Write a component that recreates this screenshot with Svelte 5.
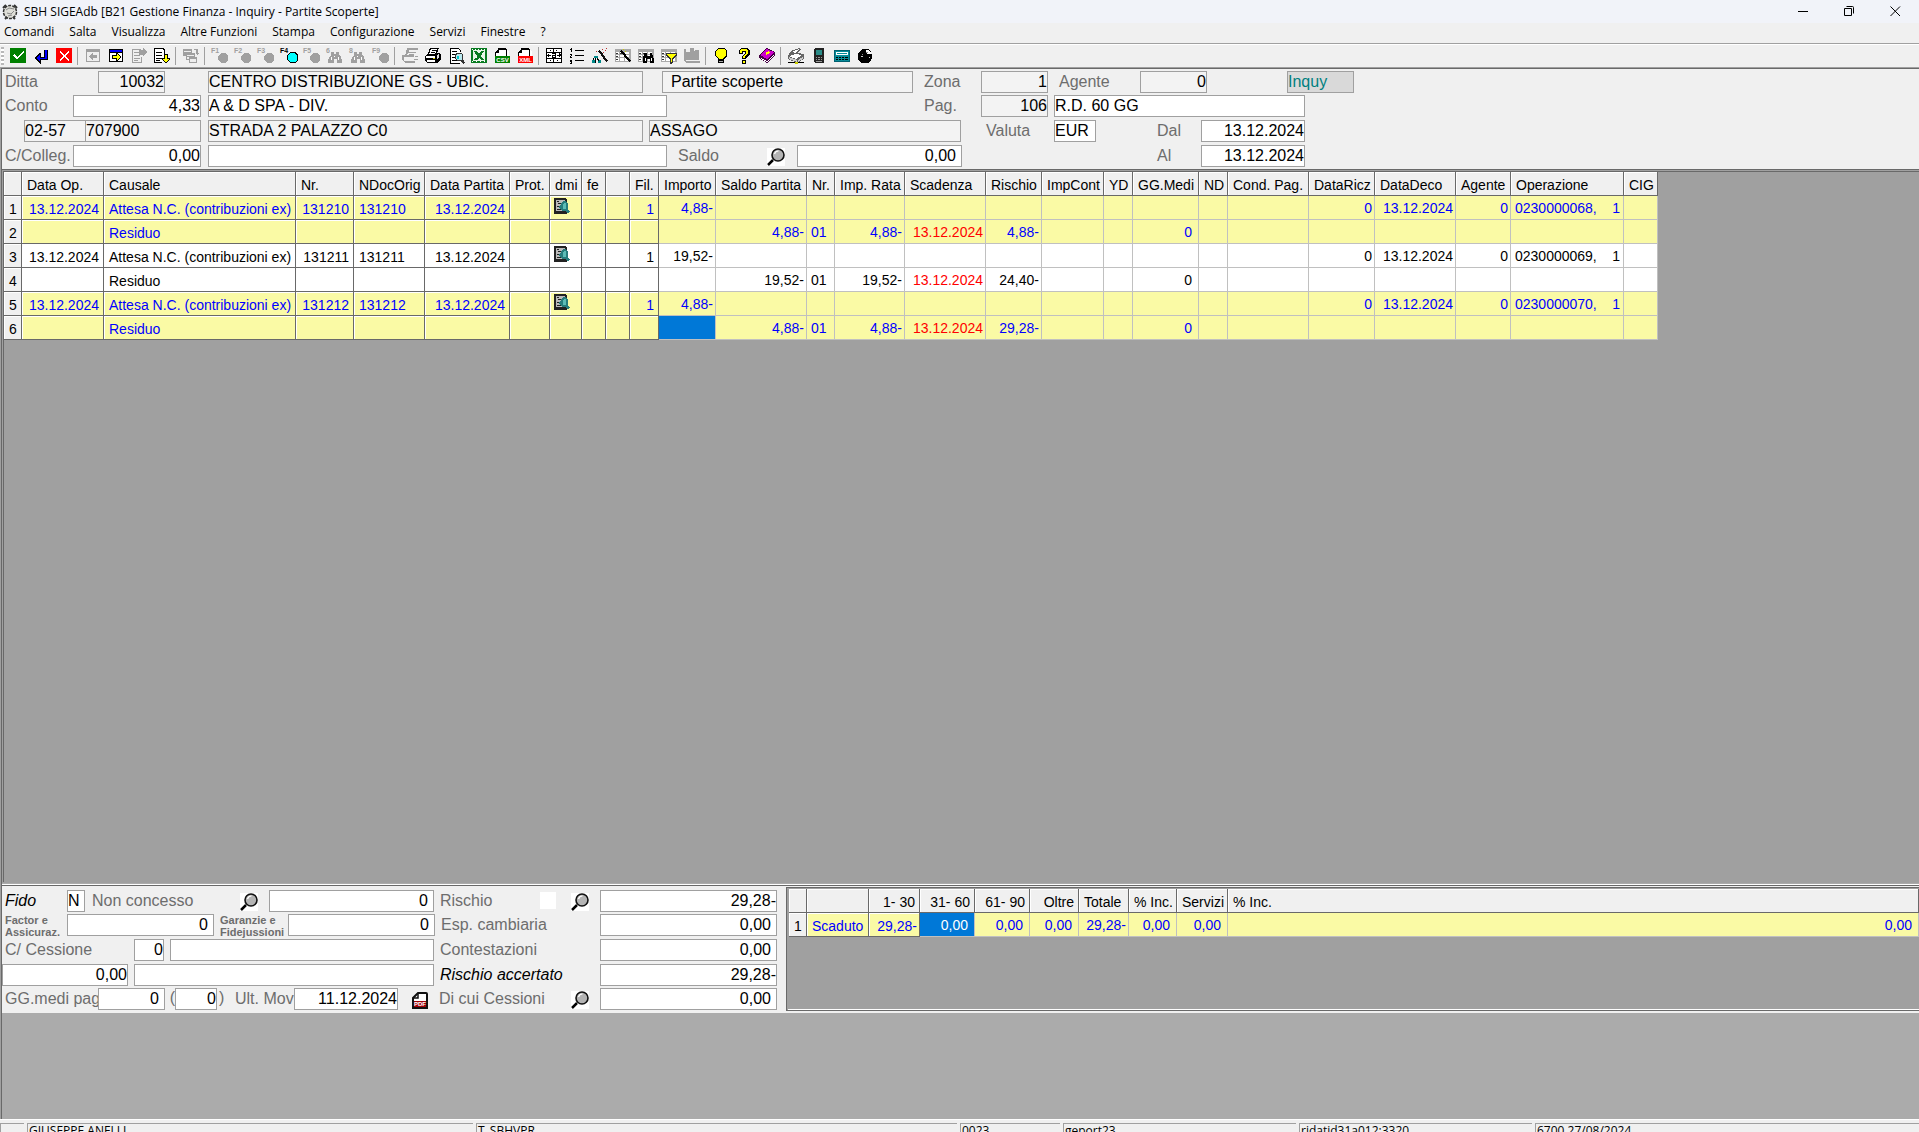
<script>
  const menus = ['Comandi', 'Salta', 'Visualizza', 'Altre Funzioni', 'Stampa', 'Configurazione', 'Servizi', 'Finestre', '?'];

  // Toolbar groups; each entry is [icon name, accessible label, optional caption, disabled]
  const tools = [
    [['ok', 'Conferma'], ['enter', 'Invio'], ['cancel', 'Annulla']],
    [['prevWin', 'Indietro', '', true], ['nextWin', 'Avanti'], ['docUp', 'Precedente', '', true], ['docDown', 'Successivo']],
    [['cascade', 'Sovrapponi', '', true]],
    [['fkey', 'Funzione 1', 'F1', true], ['fkey', 'Funzione 2', 'F2', true], ['fkey', 'Funzione 3', 'F3', true],
     ['fkeyOn', 'Funzione 4', 'F4'], ['fkey', 'Funzione 5', 'F5', true], ['binoc', 'Cerca 6', '6', true],
     ['binoc', 'Cerca 8', '8', true], ['fkey', 'Funzione 9', 'F9', true]],
    [['printOff', 'Stampa rapida', '', true], ['print', 'Stampa'], ['preview', 'Anteprima'], ['excel', 'Esporta Excel'],
     ['csv', 'Esporta CSV', 'CSV'], ['xml', 'Esporta XML', 'XML']],
    [['fit', 'Adatta colonne'], ['sort', 'Ordina'], ['wand', 'Composizione'], ['gridWand', 'Formato griglia'],
     ['gridFind', 'Cerca in griglia'], ['gridFilter', 'Filtra griglia'], ['chart', 'Grafico', '', true]],
    [['bulb', 'Suggerimento'], ['help', 'Aiuto'], ['book', 'Manuale']],
    [['scanner', 'Scanner'], ['phone', 'Telefono'], ['calc', 'Calcolatrice'], ['disc', 'Orologio']]
  ];

  const sheet = [['M3 1h7l3 3v11H3z', '#fff'], ['M2 0h9v1H3v14h9v1H2zM11 1h1v1h-1zM12 2h1v2h-1zM4 3h5v1H4zM4 6h6v1H4zM4 9h5v1H4zM4 12h5v1H4z', '#000']];
  const grid = [['M0 1h16v13H0z', '#a9a9a9'], ['M1 4h3v2H1zM5 4h4v2H5zM10 4h4v2h-4zM1 7h3v2H1zM5 7h4v2H5zM10 7h4v2h-4zM1 10h3v3H1zM5 10h4v3H5zM10 10h4v3h-4z', '#fff'], ['M1 5h2v1H1zM5 5h3v1H5zM1 8h2v1H1zM1 11h2v1H1z', '#333']];
  const filePage = [['M4 1h8l3 3v6H2V4z', '#fff']];

  const icons = {
    ok: [['M0 0h16v15H0z', '#008000'], ['M3 7l1-1 3 3 6-6 1 1-7 8z', '#fff']],
    enter: [['M11 2h4v10H8v4H7L1 10l6-5h1v4h3z', '#000'], ['M12 2h2v9H7v3l-4-4 4-3v3h5z', '#00f']],
    cancel: [['M0 0h16v15H0z', '#f00'], ['M4 3l4 4 4-4 1 1-4 4 4 4-1 1-4-4-4 4-1-1 4-4-4-4z', '#fff']],
    prevWin: [['M1 1h14v13H1z', '#a0a0a0'], ['M2 4h12v9H2z', '#eee'], ['M4 8l4-4v3h4v3H8v3z', '#a0a0a0']],
    nextWin: [['M1 1h14v13H1z', '#000'], ['M2 2h12v2H2z', '#00f'], ['M2 5h12v8H2z', '#fff'], ['M13 9L8 4v3H4v4h4v3z', '#000'], ['M12 9L9 6v2H5v2h4v2z', '#ff0']],
    docUp: [['M1 1h9v1H2v12h8v1H1zM3 4h6v1H3zM3 7h6v1H3zM3 10h6v1H3zM3 12h4v1H3z', '#a0a0a0'], ['M8 2h4V0l4 4-4 5V7H8z', '#a0a0a0'], ['M10 9h1v6h-1z', '#a0a0a0']],
    docDown: [['M1 1h10v13H1z', '#fff'], ['M0 0h10v1h1v7h-1V2H9V1H1v13h7v1H0zM2 4h6v1H2zM2 7h6v1H2zM2 10h6v1H2zM2 12h4v1H2z', '#000'], ['M10 6h4v4h2v1l-4 5-4-5v-1h2z', '#000'], ['M11 7h2v4h2l-3 4-3-4h2z', '#ff0']],
    cascade: [['M0 1h9v7H0zM3 5h9v7H3zM6 9h8v6H6z', '#a0a0a0'], ['M1 3h7v1H1zM4 7h7v1H4zM4 9h2v2H4zM7 11h6v3H7z', '#eee'], ['M11 1h4v4h1l-2 2-2-2h1V2h-2z', '#a0a0a0']],
    fkey: [['M9 5h5l2 3v4l-2 3H9l-3-3V8z', '#a0a0a0']],
    fkeyOn: [['M9 4h5l3 3v5l-3 3H9l-3-3V7z', '#000'], ['M9 5h5l2 3v4l-2 2H9l-2-2V8z', '#0ff']],
    binoc: [['M4 4h3v2h2V4h3v3h1l2 5v3h-5v-4H7v4H1v-3l3-5z', '#a0a0a0'], ['M4 9h1v3H4zM11 9h1v3h-1zM7 8h1v1H7z', '#fff']],
    printOff: [['M5 0h11v2H7v2h7v1H6L5 8H3l1-3zM0 7h12v2H2v4h11v2H3l-3-3zM7 6h5v1H7zM13 8h3v1h-3zM12 11h4v1h-4z', '#a0a0a0']],
    print: [['M5 0h9l-2 5h3l1 2v4l-4 4H2l-2-2V8l3-2z', '#000'], ['M6 1h6l-2 5H4zM1 8h9v2H1zM2 12h8v2H2z', '#fff'], ['M7 2h4v1H7zM6 4h4v1H6z', '#000'], ['M12 7l2-1v3l-2 2z', '#ddd'], ['M8 10h2v1H8z', '#cc0']],
    preview: [...sheet, ['M8 5h5l2 2v4l2 4-2 1-3-3H9L7 11V7z', '#333'], ['M9 6h4l1 1v4l-1 1H9l-1-2V7z', '#b9e8ee'], ['M9 8h2v3H9z', '#0cc']],
    excel: [['M0 0h16v15H0z', '#087a20'], ['M2 2h12v11H2z', '#e8f6e8'], ['M3 3h3l2 3 2-3h3l-3 5 3 4h-3l-2-2-2 2H3l3-4z', '#087a20'], ['M1 1h1v1H1zM4 1h1v1H4zM7 1h1v1H7zM10 1h1v1h-1zM13 1h1v1h-1zM1 13h1v1H1zM5 13h1v1H5zM9 13h1v1H9zM13 13h1v1h-1zM11 5h1v1h-1zM5 9h1v1H5z', '#fff']],
    csv: [...filePage, ['M4 0h8v1h1v7h-1V2H5v3H2v4H1V4h1V3h1V2h1z', '#000'], ['M1 8h15v7H1z', '#008000']],
    xml: [...filePage, ['M4 0h8v1h1v7h-1V2H5v3H2v4H1V4h1V3h1V2h1z', '#000'], ['M1 8h15v7H1z', '#f00']],
    fit: [['M0 0h16v15H0z', '#000'], ['M1 1h6v3H1zM8 1h7v3H8zM1 5h14v5H1zM1 11h6v3H1zM8 11h7v3H8z', '#fff'], ['M1 7l2-2v2h2v1H3v2zM15 7l-2-2v2h-2v1h2v2zM6 5h4v5H6V7h3V6H6zM7 8v1h2V8zM4 2h1v1H4zM10 2h1v1h-1zM4 12h1v1H4zM11 12h1v1h-1z', '#000']],
    sort: [['M2 0h1v4H2zM1 1h1v1H1zM1 6h2v1H1zM2 7h1v1H2zM1 8h1v1h1v1H1zM1 12h2v4H1v-1h1v-1H1zM6 2h9v1H6zM6 7h9v1H6zM6 12h9v1H6z', '#000']],
    wand: [['M6 3l2-1 8 11-2 1z', '#111'], ['M2 8h4v2H2zM0 12h3v3H0zM6 12h3v3H6z', '#088'], ['M1 10h1v2H1zM5 10h1v1h1v2H6v-1H5zM3 10h1v5H3z', '#000'], ['M4 3h1v1H4zM10 1h1v1h-1zM13 2h1v1h-1zM11 4h1v1h-1zM14 0h1v1h-1z', '#b33']],
    gridWand: [...grid, ['M5 3l2-1 9 11-2 1z', '#000'], ['M10 3h1v1h-1zM8 1h1v1H8z', '#cc0']],
    gridFind: [...grid, ['M6 5h3v3h3V5h2l2 7v3h-4v-4h-3v4H5v-4z', '#000'], ['M7 10h1v3H7zM13 10h1v3h-1z', '#fff']],
    gridFilter: [...grid, ['M5 5h11v2l-4 5v3l-3 1v-4L5 7z', '#333'], ['M6 6h9l-4 5v3h-1v-3z', '#ff0']],
    chart: [['M0 1h2v12h14v2H2l-2-2z', '#a0a0a0'], ['M2 4h4V0h4v3h1V2h4v10H2z', '#a0a0a0']],
    bulb: [['M5 0h6l3 3v5l-3 3v4H5v-4L2 8V3z', '#000'], ['M5 1h6l2 2v4l-3 4H6L3 7V3z', '#ff0'], ['M6 13h4v1H6z', '#aaa']],
    help: [['M5 0h6l3 3v3l-4 4v1H6V8l3-3V4H7v2H3V3zM6 12h4v4H6z', '#000'], ['M5 1h5l2 2v2L9 8v2H7V8l3-3V3H6v2H4V3zM7 13h2v2H7z', '#ff0']],
    book: [['M8 0l8 4v3l-8 8-8-5V7z', '#404'], ['M8 1l7 3-7 7-7-4z', '#c0c'], ['M2 10l6 3 7-7v1l-7 7-6-3z', '#fff'], ['M7 4l3-1 1 2-3 1v1H7z', '#ff0']],
    scanner: [['M3 3l8-3 2 1-4 4 7 1v5l-7 4-9-4V8z', '#666'], ['M5 3l6-2-4 5zM1 8l7-2 6 1-6 4z', '#fff'], ['M1 9l8 3v2l-8-3zM10 12l5-3v2l-5 3z', '#ccc'], ['M0 14h16v1H0z', '#000'], ['M7 14h3v2H7z', '#cc0']],
    phone: [['M4 0h8l1 1v14H4L3 14V1z', '#222'], ['M5 2h6v5H5z', '#2b8c88'], ['M5 9h1v1H5zM7 9h2v1H7zM10 9h1v1h-1zM5 11h1v1H5zM7 11h2v1H7zM10 11h1v1h-1zM5 13h6v1H5z', '#999']],
    calc: [['M0 2h16v12H0z', '#006070'], ['M1 3h14v10H1z', '#078a98'], ['M2 4h12v3H2z', '#fff'], ['M3 5h10v1H3z', '#078a98'], ['M2 9h2v1H2zM5 9h2v1H5zM8 9h2v1H8zM11 9h3v1h-3zM2 11h2v1H2zM5 11h2v1H5zM8 11h2v1H8zM11 11h3v1h-3z', '#000']],
    disc: [['M5 1h6l3 3 1 3v3l-2 4-3 1H5l-3-2-1-3V6l2-3z', '#000'], ['M9 2h3l2 3-1 1h-3V4L8 3z', '#fff'], ['M9 4h2v1H9zM5 6h1v1H5z', '#888'], ['M4 8h2v1H4zM12 9h1v1h-1z', '#ccc']],
    dmi: [['M0 0h11l2 2v14H0z', '#222'], ['M2 2h9v11H2z', '#bbb'], ['M3 3h2v1H3zM4 5h3v1H4zM3 8h2v1H3zM3 11h5v1H3z', '#222'], ['M9 3h3l2 3v5l2 3-2 1-3-2H8L5 9z', '#267c7c'], ['M10 5h2v6H9V8z', '#5cbcb6']]
  };

  // Main grid columns: title, body alignment, frozen (darker grid lines)
  const columns = [
    ['Data Op.', 'r4', 1], ['Causale', 'l', 1], ['Nr.', 'r4', 1], ['NDocOrig', 'l', 1], ['Data Partita', 'r4', 1],
    ['Prot.', 'r', 1], ['dmi', 'pic', 1], ['fe', 'l', 1], ['', 'l', 1], ['Fil.', 'r4', 1],
    ['Importo', 'r', 0], ['Saldo Partita', 'r', 0], ['Nr.', 'l', 0], ['Imp. Rata', 'r', 0], ['Scadenza', 'r', 0],
    ['Rischio', 'r', 0], ['ImpCont', 'r', 0], ['YD', 'l', 0], ['GG.Medi', 'r6', 0], ['ND', 'l', 0],
    ['Cond. Pag.', 'l', 0], ['DataRicz', 'r', 0], ['DataDeco', 'r', 0], ['Agente', 'r', 0], ['Operazione', 'l', 0], ['CIG', 'l', 0]
  ];
  const widths = [18, 82, 192, 58, 71, 85, 40, 32, 24, 24, 29, 57, 91, 28, 70, 81, 56, 62, 29, 66, 29, 81, 66, 81, 55, 113, 34];

  const entry = (nr, amount, op) => ({
    0: '13.12.2024', 1: 'Attesa N.C. (contribuzioni ex)', 2: nr, 3: nr, 4: '13.12.2024', 9: '1',
    10: amount, 21: '0', 22: '13.12.2024', 23: '0', 24: op + ',\u00a0\u00a0\u00a0 1'
  });
  const residue = (amount, risk) => ({ 1: 'Residuo', 11: amount, 12: '01', 13: amount, 14: '13.12.2024', 15: risk, 18: '0' });

  const rows = [
    entry('131210', '4,88-', '0230000068'), residue('4,88-', '4,88-'),
    entry('131211', '19,52-', '0230000069'), residue('19,52-', '24,40-'),
    entry('131212', '4,88-', '0230000070'), residue('4,88-', '29,28-')
  ];

  const aging = [
    ['', 'Scaduto', 'l'], ['1- 30', '29,28-', 'r'], ['31- 60', '0,00', 'r6'], ['61- 90', '0,00', 'r6'], ['Oltre', '0,00', 'r6'],
    ['Totale', '29,28-', 'r'], ['% Inc.', '0,00', 'r6'], ['Servizi', '0,00', 'r6'], ['% Inc.', '0,00', 'r6']
  ];
  const agingWidths = [18, 62, 51, 55, 55, 49, 50, 48, 51];
  const status = ['', 'GIUSEPPE ANELLI', 'T_SBHVPR', '0023', 'geport23', 'ridatid31a012:3320', '6700 27/08/2024'];
</script>

{#snippet icon(name, caption)}
  <svg class="icon" viewBox="0 0 16 16" aria-hidden="true">
    {#each icons[name] as [d, fill]}<path {d} {fill} />{/each}
    {#if caption}
      {#if name === 'csv' || name === 'xml'}
        <text class="tag" x="8.500" y="14" text-anchor="middle">{caption}</text>
      {:else}
        <text class="fk" class:on={name === 'fkeyOn'} x="-1" y="5">{caption}</text>
      {/if}
    {/if}
  </svg>
{/snippet}

{#snippet lens(label)}
  <button class="lens" type="button" aria-label={label}>
    <svg viewBox="0 0 18 18" aria-hidden="true">
      <path d="M6 12L1 17" stroke="#000" stroke-width="2.500" />
      <circle cx="11" cy="7" r="6" fill="#b4b4b4" stroke="#111" stroke-width="1.600" />
      <path d="M7.500 6a4 4 0 0 1 4-3" fill="none" stroke="#fff" stroke-width="1.200" />
    </svg>
  </button>
{/snippet}

<div class="window">
  <header class="titlebar">
    <svg class="logo" viewBox="0 0 16 16" aria-hidden="true">
      <circle cx="8" cy="8" r="6.500" fill="#deded8" stroke="#333" stroke-width="1.500" stroke-dasharray="3 1" />
      <path d="M1 4l3-3M12 1l3 3M3 15l2-2M13 15l-2-2" stroke="#333" stroke-width="2" />
      <path d="M4 6l3-2 5 1M5 9l4 1 3-3M6 12l4-1" fill="none" stroke="#888" />
    </svg>
    <h1>SBH SIGEAdb [B21 Gestione Finanza - Inquiry - Partite Scoperte]</h1>
    <div class="controls">
      <button aria-label="Riduci a icona"><svg viewBox="0 0 11 11"><path d="M0 5.500h10" /></svg></button>
      <button aria-label="Ripristina"><svg viewBox="0 0 11 11"><path d="M.500 2.500h7v7h-7zM2.500.500h6q1 0 1 1v6" /></svg></button>
      <button aria-label="Chiudi"><svg viewBox="0 0 11 11"><path d="M.500.500l9.500 9.500M10 .500L.500 10" /></svg></button>
    </div>
  </header>

  <nav class="menubar" aria-label="Menu">
    {#each menus as m}<button>{m}</button>{/each}
  </nav>

  <div class="toolbar" role="toolbar" aria-label="Strumenti">
    <span class="grip"></span>
    {#each tools as group, g}
      {#if g}<span class="sep"></span>{/if}
      {#each group as [name, label, caption, disabled]}
        <button aria-label={label} {disabled}>{@render icon(name, caption)}</button>
      {/each}
    {/each}
  </div>

  <main class="client">
    <form class="head">
      <div class="row h1">
        <label for="ditta">Ditta</label>
        <input id="ditta" class="num ro" value="10032" readonly />
        <input class="ro w435" aria-label="Ragione sociale ditta" value="CENTRO DISTRIBUZIONE GS - UBIC." readonly />
        <input class="ro w251 inset" aria-label="Tipo partite" value="Partite scoperte" readonly />
        <label for="zona" class="in">Zona</label>
        <input id="zona" class="num ro" value="1" readonly />
        <label for="agente" class="in">Agente</label>
        <input id="agente" class="num ro" value="0" readonly />
        <input class="mode" aria-label="Modalità" value="Inquy" readonly />
      </div>
      <div class="row h2">
        <label for="conto">Conto</label>
        <input id="conto" class="num" value="4,33" />
        <input class="w459" aria-label="Descrizione conto" value="A & D SPA - DIV." />
        <label for="pag" class="far">Pag.</label>
        <input id="pag" class="num ro" value="106" readonly />
        <input aria-label="Descrizione pagamento" value="R.D. 60 GG" />
      </div>
      <div class="row h3">
        <div class="pair">
          <input class="ro code" aria-label="Codice" value="02-57" readonly />
          <input class="ro" aria-label="Codice cliente" value="707900" readonly />
        </div>
        <input class="ro w435" aria-label="Indirizzo" value="STRADA 2 PALAZZO C0" readonly />
        <input class="ro" aria-label="Città" value="ASSAGO" readonly />
        <label for="valuta" class="mid">Valuta</label>
        <input id="valuta" value="EUR" />
        <label for="dal" class="near">Dal</label>
        <input id="dal" class="num" value="13.12.2024" />
      </div>
      <div class="row h4">
        <label for="colleg">C/Colleg.</label>
        <input id="colleg" class="num" value="0,00" />
        <input class="w459" aria-label="Descrizione conto collegato" value="" />
        <label for="saldo" class="in">Saldo</label>
        {@render lens('Dettaglio saldo')}
        <input id="saldo" class="num trail w165" value="0,00" />
        <label for="al" class="near">Al</label>
        <input id="al" class="num" value="13.12.2024" />
      </div>
    </form>

    <section class="sunken list">
      <table class="fixed">
        <colgroup>{#each widths as w}<col style:width="{w}px" />{/each}</colgroup>
        <thead>
          <tr><th></th>{#each columns as [title]}<th>{title}</th>{/each}</tr>
        </thead>
        <tbody>
          {#each rows as row, i}
            <tr class:alt={i % 4 < 2}>
              <th scope="row">{i + 1}</th>
              {#each columns as [, align, frozen], c}
                <td class={align} class:frozen={frozen} class:due={c === 14} class:sel={i === 5 && c === 10}>
                  {#if c === 6 && i % 2 === 0}<button class="dmi" aria-label="Documento riga {i + 1}">{@render icon('dmi')}</button>{:else}{row[c] ?? ''}{/if}
                </td>
              {/each}
            </tr>
          {/each}
        </tbody>
      </table>
    </section>

    <div class="bottom">
      <form class="credit">
        <div class="row b1">
          <label for="fido" class="strong">Fido</label>
          <input id="fido" value="N" />
          <label for="fidoImp" class="nudge">Non concesso</label>
          {@render lens('Dettaglio fido')}
          <input id="fidoImp" class="num trail w165" value="0" />
          <label for="rischio">Rischio</label>
          <span class="blank"></span>
          {@render lens('Dettaglio rischio')}
          <input id="rischio" class="num w177" value="29,28-" />
        </div>
        <div class="row b2">
          <label for="factor" class="small">Factor e<br />Assicuraz.</label>
          <input id="factor" class="num trail" value="0" />
          <label for="garanzie" class="small">Garanzie e<br />Fidejussioni</label>
          <input id="garanzie" class="num trail" value="0" />
          <label for="esp">Esp. cambiaria</label>
          <input id="esp" class="num trail" value="0,00" />
        </div>
        <div class="row b3">
          <label for="cessione">C/ Cessione</label>
          <input id="cessione" class="num" value="0" />
          <input aria-label="Descrizione cessione" value="" />
          <label for="contest">Contestazioni</label>
          <input id="contest" class="num trail" value="0,00" />
        </div>
        <div class="row b4">
          <input class="num w126" aria-label="Conto cessione" value="0,00" />
          <input aria-label="Descrizione conto cessione" value="" />
          <label for="accertato" class="strong">Rischio accertato</label>
          <input id="accertato" class="num" value="29,28-" />
        </div>
        <div class="row b5">
          <label for="ggmedi">GG.medi pag</label>
          <input id="ggmedi" class="num trail" value="0" />
          <div class="paren"><span>(</span><input class="num" aria-label="Giorni medi" value="0" /><span>)</span></div>
          <label for="ultmov" class="nudge">Ult. Mov</label>
          <input id="ultmov" class="num" value="11.12.2024" />
          <button class="lens pdf" type="button" aria-label="PDF">
            <svg viewBox="0 0 16 17" aria-hidden="true">
              <path d="M6 1h8q1 0 1 1v14H1V6z" fill="#fff" stroke="#111" stroke-width="2" />
              <path d="M6 1v5H1" fill="none" stroke="#111" stroke-width="1.500" />
              <path d="M2 9h12v6H2z" fill="#a00008" />
              <text class="tag" x="8" y="14" text-anchor="middle">PDF</text>
            </svg>
          </button>
          <label for="cessioni" class="in">Di cui Cessioni</label>
          {@render lens('Dettaglio cessioni')}
          <input id="cessioni" class="num trail w177" value="0,00" />
        </div>
      </form>

      <section class="sunken aging">
        <table class="fixed full">
          <colgroup>{#each agingWidths as w}<col style:width="{w}px" />{/each}<col /></colgroup>
          <thead>
            <tr><th></th>{#each aging as [title], c}<th class:right={c > 0 && c < 5}>{title}</th>{/each}</tr>
          </thead>
          <tbody>
            <tr class="alt">
              <th scope="row">1</th>
              {#each aging as [, value, align], c}
                <td class={align} class:frozen={c < 2} class:sel={c === 2}>{value}</td>
              {/each}
            </tr>
          </tbody>
        </table>
      </section>
    </div>
  </main>

  <footer class="status">
    {#each status as s}<span>{s}</span>{/each}
  </footer>
</div>

<style>
  :global(body) { overflow: hidden; }
  .window {
    display: flex; flex-direction: column; height: 100vh; overflow: hidden;
    background: #f0f0f0; color: #000; font: 16px/20px "Liberation Sans", Arial, sans-serif;
  }
  button { border: 0; padding: 0; margin: 0; background: none; color: inherit; font: inherit; }
  svg { display: block; }

  .titlebar { display: flex; align-items: center; height: 23px; background: #f1f3f9; padding-left: 2px; }
  .logo { width: 16px; height: 16px; margin-right: 6px; }
  h1 { margin: 0; flex: 1; font: 12px/20px "Open Sans", sans-serif; }
  .controls { display: flex; padding-right: 1px; }
  .controls button { width: 46px; height: 20px; display: grid; place-items: center; }
  .controls svg { width: 11px; height: 11px; fill: none; stroke: #000; }

  .menubar { display: flex; gap: 15px; height: 20px; padding-left: 4px; border-bottom: 1px solid #a0a0a0; }
  .menubar button { font: 12px/18px "Open Sans", sans-serif; height: 18px; white-space: nowrap; }

  .toolbar { display: flex; align-items: center; height: 22px; border-top: 1px solid #fff; }
  .toolbar button { width: 23px; height: 22px; display: grid; place-items: center; }
  .grip { width: 3px; height: 18px; margin: 0 2px 0 1px; background: repeating-linear-gradient(#b8b8b8 0 2px, #fff 2px 4px); }
  .sep { width: 1px; height: 18px; margin: 0 3px 0 2px; background: #a0a0a0; }
  .icon { width: 16px; height: 16px; overflow: visible; shape-rendering: crispEdges; }
  .fk { font: bold 7px "Liberation Sans", sans-serif; fill: #a0a0a0; }
  .fk.on { fill: #000; }
  .tag { font: bold 6px "Liberation Sans", sans-serif; fill: #fff; }

  .client {
    flex: 1; min-height: 0; display: flex; flex-direction: column; background: #ababab; padding-bottom: 106px;
    border: solid #696969; border-width: 1px 0 0 1px; outline: 1px solid #a0a0a0; margin: 1px 0 0 1px;
  }
  .head { flex: none; display: grid; grid-template-rows: 24px 25px 25px 24px; padding-top: 2px; background: #f0f0f0; border-bottom: 1px solid #696969; }
  .row { display: grid; column-gap: 6px; padding-left: 3px; align-items: start; }
  .h1 { grid-template-columns: 87px 67px 472px 264px 56px 67px 80px 67px 141px; }
  .h2 { grid-template-columns: 62px 128px 460px 302px 67px 251px; }
  .h3 { grid-template-columns: 196px 436px 312px 81px 42px 93px 104px; }
  .h4 { grid-template-columns: 62px 128px 460px 88px 18px 171px 227px 104px; }

  input {
    box-sizing: border-box; width: 100%; min-width: 0; height: 22px; margin: 0; padding: 0;
    justify-self: end; border: 1px solid #a0a0a0; border-radius: 0; background: #fff; color: #000;
    font: inherit; outline: none;
  }
  .ro { background: #f3f3f3; }
  .num { text-align: right; }
  .num.trail { padding-right: 5px; }
  .inset { padding-left: 8px; }
  .w459 { width: 459px; }
  .w435 { width: 435px; }
  .w251 { width: 251px; }
  .w165 { width: 165px; }
  .w177 { width: 177px; }
  .mode { width: 67px; background: #d9d9d9; color: #008080; }
  label { color: #6d6d6d; white-space: nowrap; padding-top: 1px; }
  label.in { padding-left: 5px; }
  label.nudge { padding-left: 1px; }
  label.mid { padding-left: 19px; }
  label.far { justify-self: end; width: 51px; }
  label.near { justify-self: end; width: 38px; }
  label.strong { color: #000; font-style: italic; }
  label.small { font: bold 11px/12px "Liberation Sans", sans-serif; padding-top: 0; }
  .pair { display: flex; padding-left: 19px; }
  .pair .code { flex: none; width: 61px; border-right: 0; }
  .lens { justify-self: end; width: 18px; height: 18px; margin-top: 3px; background: #fff; }
  .pdf { width: 16px; background: none; }
  .blank { height: 17px; margin-top: 2px; background: #fff; }

  .sunken { border: 1px solid #a0a0a0; border-right: 0; box-shadow: inset 1px 1px #696969; padding: 1px 0 0 1px; background: #a0a0a0; overflow: hidden; }
  .list { flex: 1; min-height: 0; }

  table { border-collapse: separate; border-spacing: 0; font-size: 14px; line-height: 18px; }
  .fixed { table-layout: fixed; width: 0; }
  .full { width: 100%; }
  th, td {
    box-sizing: border-box; height: 24px; padding: 4px 0 1px 4px; overflow: hidden; white-space: nowrap;
    font-weight: 400; text-align: left; border: solid #696969; border-width: 0 1px 1px 0;
  }
  th { background: #f0f0f0; box-shadow: inset 1px 1px #fff; padding-left: 5px; }
  th.right { text-align: right; padding-right: 4px; }
  td { padding-top: 3px; padding-bottom: 2px; background: #fff; border-color: #c0c0c0; }
  td.frozen { border-color: #696969; box-shadow: inset 1px 1px #fff; padding: 4px 0 1px 5px; }
  .alt td { background: #fafaa5; color: #00f; }
  tr td.r, tr td.r4, tr td.r6 { padding-left: 0; padding-right: 2px; text-align: right; }
  tr td.r4 { padding-right: 4px; }
  tr td.r6 { padding-right: 6px; }
  tr td.due { color: #f00; }
  tr td.sel { background: #0078d7; color: #fff; }
  tr td.pic { padding: 2px 0 0 4px; vertical-align: top; }
  .dmi { display: block; }

  .bottom { flex: none; display: flex; background: #f0f0f0; border-top: 1px solid #696969; box-shadow: 0 -1px #fff; margin-top: 2px; }
  .credit { flex: none; width: 784px; display: grid; grid-template-rows: 24px 25px 25px 24px 25px; padding-top: 4px; }
  .b1 { grid-template-columns: 56px 18px 143px 18px 170px 94px 16px 27px 182px; }
  .b2 { grid-template-columns: 56px 147px 62px 147px 153px 177px; }
  .b3 { grid-template-columns: 123px 30px 264px 154px 177px; }
  .b4 { grid-template-columns: 123px 300px 154px 177px; }
  .b5 { grid-template-columns: 87px 67px 57px 54px 104px 24px 131px 18px 182px; }
  .w126 { width: 126px; }
  .paren { display: flex; color: #6d6d6d; }
  .paren input { width: 42px; margin-right: 2px; }
  .paren span:first-child { width: 4px; flex: none; display: flex; justify-content: flex-end; }
  .aging { flex: 1; min-width: 0; margin: 1px 0 2px; padding-left: 2px; border-color: #696969; border-right: 0; box-shadow: inset 1px 1px #a0a0a0, inset 0 -1px #fff; }

  .status {
    flex: none; display: grid; grid-template-columns: 24px 446px 481px 100px 233px 233px 1fr; column-gap: 3px;
    height: 9px; padding-top: 3px; overflow: hidden; border-top: 1px solid #fff; background: #f0f0f0;
    font: 12px/14px "Open Sans", sans-serif;
  }
  .status span { border: solid #a0a0a0; border-width: 1px 0 0 1px; padding-left: 1px; white-space: nowrap; height: 18px; }
</style>
